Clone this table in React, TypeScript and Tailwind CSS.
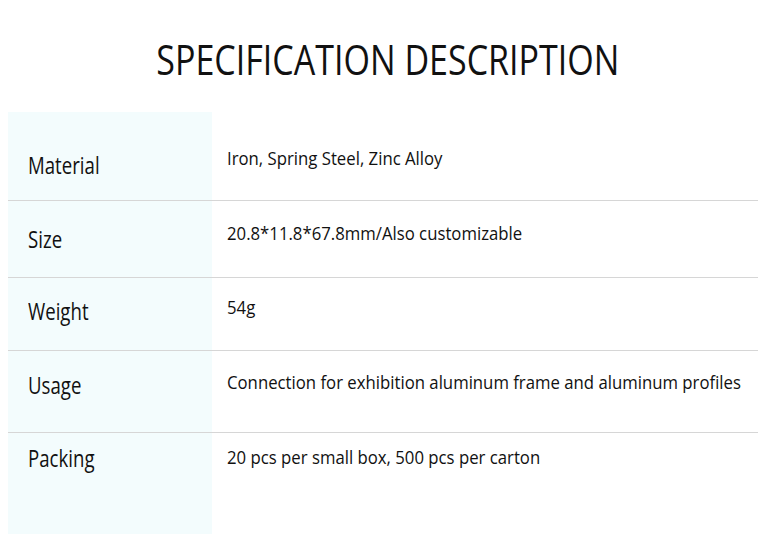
const rows = [
  { label: 'Material', value: 'Iron, Spring Steel, Zinc Alloy', h: 'h-[89px]', lp: 'pt-[42px]', vp: 'pt-[35px]' },
  { label: 'Size', value: '20.8*11.8*67.8mm/Also customizable', h: 'h-[77px]', lp: 'pt-[27px]', vp: 'pt-[21px]' },
  { label: 'Weight', value: '54g', h: 'h-[73px]', lp: 'pt-[22px]', vp: 'pt-[18px]' },
  { label: 'Usage', value: 'Connection for exhibition aluminum frame and aluminum profiles', h: 'h-[82px]', lp: 'pt-[23px]', vp: 'pt-[20px]' },
  { label: 'Packing', value: '20 pcs per small box, 500 pcs per carton', h: 'h-[101px]', lp: 'pt-[14px]', vp: 'pt-[13px]' },
]

export default function App() {
  return (
    <main
      className="w-[771px] h-[534px] bg-white text-[#111] overflow-hidden"
      style={{ fontFamily: '"Open Sans", "Noto Sans", sans-serif' }}
    >
      <section className="h-[112px] flex justify-center pt-[38px] pl-[5px]">
        <h1 className="inline-block text-[42px] leading-none font-normal whitespace-nowrap scale-x-[0.81] origin-center">
          SPECIFICATION DESCRIPTION
        </h1>
      </section>

      <div className="ml-[8px] w-[750px] flex flex-col">
        {rows.map((r, i) => (
          <div
            key={r.label}
            className={`flex ${r.h} ${i < rows.length - 1 ? 'border-b border-[#d6d6d6]' : ''}`}
          >
            <div className={`w-[204px] shrink-0 bg-[#f3fcfd] pl-[20px] ${r.lp}`}>
              <span className="inline-block text-[23px] leading-none whitespace-nowrap scale-x-[0.81] origin-left">
                {r.label}
              </span>
            </div>
            <div className={`pl-[15px] ${r.vp}`}>
              <span className="inline-block text-[18px] leading-none whitespace-nowrap scale-x-[0.93] origin-left">
                {r.value}
              </span>
            </div>
          </div>
        ))}
      </div>
    </main>
  )
}
